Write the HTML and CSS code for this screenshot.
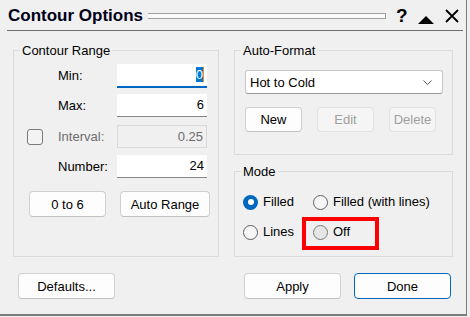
FILE: index.html
```html
<!DOCTYPE html>
<html>
<head>
<meta charset="utf-8">
<title>Contour Options</title>
<link rel="stylesheet" href="styles.css">
</head>
<body>
<div class="window">
  <div class="titlebar">
    <span class="title">Contour Options</span>
    <span class="grip"></span>
    <span class="help">?</span>
    <svg class="collapse" width="16" height="8" viewBox="0 0 16 8"><path d="M8 0 L16 8 L0 8 Z" fill="#000"/></svg>
    <svg class="close" width="14" height="14" viewBox="0 0 14 14"><path d="M1 1 L13 13 M13 1 L1 13" stroke="#000" stroke-width="1.8" fill="none"/></svg>
  </div>

  <div class="content">
    <fieldset class="group range">
      <legend>Contour Range</legend>
      <div class="fields">
        <span></span><label class="lbl">Min:</label><div class="input focused"><span class="sel">0</span></div>
        <span></span><label class="lbl">Max:</label><div class="input">6</div>
        <span class="checkbox"></span><label class="lbl disabled">Interval:</label><div class="input disabled">0.25</div>
        <span></span><label class="lbl">Number:</label><div class="input">24</div>
      </div>
      <div class="range-buttons">
        <button class="btn w-06">0 to 6</button>
        <button class="btn w-auto">Auto Range</button>
      </div>
    </fieldset>

    <div class="right">
      <fieldset class="group format">
        <legend>Auto-Format</legend>
        <div class="select">
          <span>Hot to Cold</span>
          <svg width="9" height="5" viewBox="0 0 9 5"><path d="M0.5 0.5 L4.5 4.5 L8.5 0.5" stroke="#555" stroke-width="1" fill="none"/></svg>
        </div>
        <div class="format-buttons">
          <button class="btn w-new">New</button>
          <button class="btn w-new" disabled>Edit</button>
          <button class="btn w-del" disabled>Delete</button>
        </div>
      </fieldset>

      <fieldset class="group mode">
        <legend>Mode</legend>
        <div class="radios">
          <label class="radio"><span class="dot checked"></span>Filled</label>
          <label class="radio"><span class="dot"></span>Filled (with lines)</label>
          <label class="radio"><span class="dot"></span>Lines</label>
          <label class="radio"><span class="dot hover"></span>Off</label>
        </div>
      </fieldset>
    </div>
  </div>

  <div class="footer">
    <button class="btn w-foot">Defaults...</button>
    <button class="btn w-foot push">Apply</button>
    <button class="btn w-foot default">Done</button>
  </div>

  <div class="highlight"></div>
</div>
</body>
</html>
```

FILE: styles.css
```css
* { box-sizing: border-box; }

body {
  margin: 0;
  background: #f0f0f0;
  font-family: "Liberation Sans", Arial, sans-serif;
  font-size: 13px;
  color: #000;
}

.window {
  position: relative;
  width: 467px;
  height: 316px;
  border-right: 1px solid #7c7c7c;
  border-bottom: 2px solid #7c7c7c;
}

/* Title bar */
.titlebar {
  display: flex;
  align-items: flex-start;
  height: 31px;
  margin: 0 3px 0 7px;
  border-bottom: 1px solid #6e6e6e;
}
.title {
  margin-top: 7px;
  padding-left: 1px;
  font-size: 17px;
  font-weight: bold;
  line-height: 17px;
  color: #000018;
}
.grip {
  flex: 1;
  height: 6px;
  margin: 13px 10px 0 5px;
  border: 1px solid #a0a0a0;
  border-left: none;
  background: #fafafa;
}
.help {
  width: 11px;
  margin-top: 6px;
  font-size: 19px;
  font-weight: bold;
  line-height: 19px;
  text-align: center;
}
.collapse { margin: 16px 0 0 11px; }
.close { margin: 9px 4px 0 11px; }

/* Content */
.content {
  display: grid;
  grid-template-columns: 206px 219px;
  column-gap: 15px;
  padding: 11px 0 0 13px;
}

.group {
  margin: 0;
  padding: 0;
  min-width: 0;
  border: 1px solid #dcdcdc;
}
.group legend {
  margin-left: 6px;
  padding: 0 2px;
  line-height: 17px;
  font-size: 13px;
}

.range { height: 215px; }

.fields {
  display: grid;
  grid-template-columns: 31px 59px 90px;
  grid-template-rows: 24px 25px 24px 23px;
  row-gap: 6px;
  margin: 5px 0 0 13px;
}
.lbl {
  line-height: 23px;
}
.lbl.disabled { color: #6d6d6d; }

.input {
  height: 23px;
  background: #fff;
  border-bottom: 1px solid #868686;
  text-align: right;
  padding-right: 3px;
  line-height: 22px;
}
.input.focused {
  height: 24px;
  border-bottom: 2px solid #0067c0;
}
.input.disabled {
  background: #f0f0f0;
  border: 1px solid #d9d9d9;
  color: #6d6d6d;
  line-height: 21px;
  height: 23px;
}
.sel {
  display: inline-block;
  background: #0078d7;
  color: #fff;
  line-height: 15px;
  border-right: 1px solid #ff8c00;
  vertical-align: middle;
  margin-top: -2px;
}
.checkbox {
  align-self: center;
  width: 16px;
  height: 16px;
  border: 1px solid #7a7a7a;
  border-radius: 3px;
  background: #f3f3f3;
}

.range-buttons {
  display: flex;
  gap: 14px;
  margin: 13px 0 0 15px;
}

.btn {
  font: inherit;
  color: #000;
  height: 26px;
  padding: 0;
  background: #fdfdfd;
  border: 1px solid #d0d0d0;
  border-bottom-color: #c2c2c2;
  border-radius: 4px;
}
.btn:disabled {
  background: #f5f5f5;
  border-color: #e2e2e2;
  color: #a0a0a0;
}
.w-06 { width: 77px; }
.w-auto { width: 90px; }
.w-new { width: 57px; height: 25px; }
.w-del { width: 47px; height: 25px; }
.w-foot { width: 97px; }
.default { border: 1px solid #0067c0; }

/* Right column */
.right {
  display: flex;
  flex-direction: column;
  gap: 8px;
}
.format { height: 113px; }
.mode { height: 94px; }

.select {
  display: flex;
  align-items: center;
  justify-content: space-between;
  width: 198px;
  height: 24px;
  margin: 11px 0 0 10px;
  padding: 0 10px 0 4px;
  background: #fff;
  border: 1px solid #c6c6c6;
  border-bottom-color: #9a9a9a;
  border-radius: 3px;
}
.format-buttons {
  display: flex;
  gap: 15px;
  margin: 13px 0 0 10px;
}

.radios {
  display: grid;
  grid-template-columns: 70px auto;
  grid-auto-rows: 16px;
  row-gap: 14px;
  margin: 14px 0 0 8px;
}
.radio {
  display: flex;
  align-items: center;
  gap: 5px;
  line-height: 16px;
  white-space: nowrap;
}
.dot {
  position: relative;
  width: 15px;
  height: 15px;
  flex: none;
  border-radius: 50%;
  border: 1px solid #5f5f5f;
  background: #f6f6f6;
}
.dot.hover { background: #e6e6e6; border-color: #7a7a7a; }
.dot.checked {
  border: none;
  background: #0067c0;
}
.dot.checked::after {
  content: "";
  position: absolute;
  left: 4.5px;
  top: 4.5px;
  width: 6px;
  height: 6px;
  border-radius: 50%;
  background: #fff;
}

/* Footer */
.footer {
  display: flex;
  gap: 13px;
  margin-top: 16px;
  padding: 0 15px 0 18px;
}
.push { margin-left: auto; }

/* Annotation overlay */
.highlight {
  position: absolute;
  left: 302px;
  top: 217px;
  width: 77px;
  height: 33px;
  border: 4px solid #ff0000;
}
```
